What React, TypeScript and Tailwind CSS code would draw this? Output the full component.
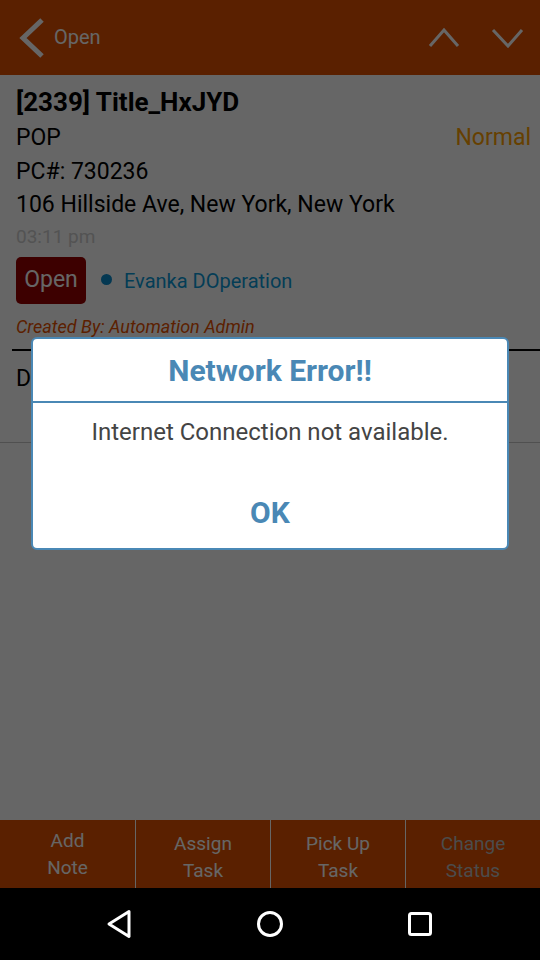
const actions = [
  { top: "Add", bottom: "Note", disabled: false, raised: true },
  { top: "Assign", bottom: "Task", disabled: false, raised: false },
  { top: "Pick Up", bottom: "Task", disabled: false, raised: false },
  { top: "Change", bottom: "Status", disabled: true, raised: false },
];

export default function App() {
  return (
    <div className="relative w-[540px] h-[960px] overflow-hidden bg-white font-['Roboto',sans-serif] flex flex-col">
      {/* header */}
      <div className="h-[75px] shrink-0 bg-[#e15000] flex items-center">
        <svg width="54" height="75" viewBox="0 0 54 75" className="shrink-0">
          <path d="M42 20 L23 38 L42 56" fill="none" stroke="white" strokeWidth="5" />
        </svg>
        <span className="text-[20px] text-white pb-[1px]">Open</span>
        <svg width="120" height="75" viewBox="0 0 120 75" className="ml-auto shrink-0">
          <path d="M10 46 L24 30 L38 46" fill="none" stroke="white" strokeWidth="3" />
          <path d="M73 30 L88 46 L102 30" fill="none" stroke="white" strokeWidth="3" />
        </svg>
      </div>

      {/* task details */}
      <div className="flex-1 flex flex-col">
        <div className="px-[16px] pt-[12px]">
          <div className="text-[26px] font-bold text-black leading-[30px]">[2339] Title_HxJYD</div>
          <div className="flex justify-between items-center leading-[34px] mt-[4px]">
            <span className="text-[23px] text-black">POP</span>
            <span className="text-[23px] text-[#ffa000] mr-[-7px]">Normal</span>
          </div>
          <div className="text-[23px] text-black leading-[33px]">PC#: 730236</div>
          <div className="text-[23px] text-black leading-[33px]">106 Hillside Ave, New York, New York</div>
          <div className="text-[19px] text-[#cfcfcf] leading-[32px]">03:11 pm</div>
          <div className="flex items-center mt-[4px]">
            <div className="h-[47px] w-[70px] rounded-[5px] bg-[#990000] text-white text-[23px] flex items-center justify-center">Open</div>
            <span className="ml-[15px] w-[11px] h-[11px] rounded-full bg-[#0a8ccc] mb-[3px]" />
            <span className="ml-[12px] text-[20px] text-[#0a9ad8]">Evanka DOperation</span>
          </div>
          <div className="mt-[11px] text-[18px] italic text-[#e65100] leading-[24px]">Created By: Automation Admin</div>
        </div>
        <div className="ml-[12px] mt-[10px] h-[2px] bg-black" />
        <div className="px-[16px] pt-[13px] pb-[48px] text-[23px] text-black leading-[30px]">Description</div>
        <div className="h-[1px] bg-[#c8c8c8]" />
      </div>

      {/* action bar */}
      <div className="h-[68px] shrink-0 bg-[#e15000] grid grid-cols-4">
        {actions.map((a, i) => (
          <div
            key={a.top}
            className={`flex flex-col items-center justify-center text-[19px] leading-[27px] ${
              i > 0 ? "border-l border-white" : ""
            } ${a.disabled ? "text-[#bdbdbd]" : "text-white"} ${a.raised ? "pb-[1px]" : "pt-[5px]"}`}
          >
            <span>{a.top}</span>
            <span>{a.bottom}</span>
          </div>
        ))}
      </div>

      {/* dim overlay */}
      <div className="absolute left-0 top-0 w-[540px] h-[888px] bg-black/60" />

      {/* dialog */}
      <div className="absolute left-[31px] top-[337px] w-[478px] h-[213px] bg-white rounded-[6px] border-2 border-[#4a88b5] flex flex-col">
        <div className="h-[62px] flex items-center justify-center text-[30px] font-bold text-[#4a88b5]">Network Error!!</div>
        <div className="h-[2px] bg-[#4a88b5]" />
        <div className="pt-[14px] text-center text-[24px] text-[#444444] leading-[30px]">Internet Connection not available.</div>
        <div className="mt-[48px] text-center text-[30px] font-bold text-[#4a88b5] leading-[36px]">OK</div>
      </div>

      {/* system nav */}
      <div className="h-[72px] shrink-0 bg-black flex items-center pl-[45px]">
        <div className="w-[150px] flex justify-center">
          <svg width="26" height="30" viewBox="0 0 26 30" className="ml-[-2px]">
            <path d="M23 2.5 L3 15 L23 27.5 Z" fill="none" stroke="white" strokeWidth="3" strokeLinejoin="round" />
          </svg>
        </div>
        <div className="w-[150px] flex justify-center">
          <svg width="28" height="28" viewBox="0 0 28 28">
            <circle cx="14" cy="14" r="11.5" fill="none" stroke="white" strokeWidth="3" />
          </svg>
        </div>
        <div className="w-[150px] flex justify-center">
          <svg width="24" height="24" viewBox="0 0 24 24">
            <rect x="1.5" y="1.5" width="21" height="21" rx="2" fill="none" stroke="white" strokeWidth="3" />
          </svg>
        </div>
      </div>
    </div>
  );
}
